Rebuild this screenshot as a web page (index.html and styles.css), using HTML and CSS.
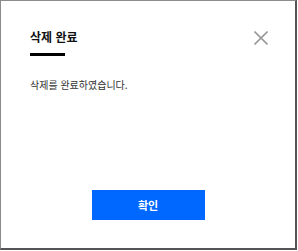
FILE: index.html
```html
<!DOCTYPE html>
<html lang="ko">
<head>
  <meta charset="UTF-8">
  <title>삭제 완료</title>
  <link rel="stylesheet" href="styles.css">
</head>
<body>
  <div class="dialog">
    <div class="head">
      <div>
        <h2 class="title">삭제 완료</h2>
        <div class="bar"></div>
      </div>
      <button class="close" aria-label="닫기">
        <svg width="14" height="14" viewBox="0 0 14 14">
          <path d="M0.5 0.5 L13.5 13.5 M13.5 0.5 L0.5 13.5" stroke="#9a9a9a" stroke-width="1.6" fill="none"/>
        </svg>
      </button>
    </div>
    <p class="msg">삭제를 완료하였습니다.</p>
    <div class="foot">
      <button class="okBtn">확인</button>
    </div>
  </div>
</body>
</html>
```

FILE: styles.css
```css
body {
  margin: 0;
  padding: 0;
  background: #fff;
  font-family: "Noto Sans CJK KR", "Noto Sans", sans-serif;
}

.dialog {
  width: 297px;
  height: 250px;
  box-sizing: border-box;
  border: 1px solid #8c8c8c;
  border-right: 2px solid #555;
  border-bottom: 2px solid #555;
  padding: 27px 27px 28px 29px;
  display: flex;
  flex-direction: column;
}

.head {
  display: flex;
  justify-content: space-between;
  align-items: flex-start;
}

.title {
  margin: 0;
  font-size: 12px;
  font-weight: bold;
  line-height: 17px;
  color: #111;
}

.bar {
  width: 35px;
  height: 3px;
  background: #000;
  margin-top: 8px;
}

.close {
  border: none;
  background: none;
  padding: 0;
  margin-top: 3px;
  width: 14px;
  height: 14px;
  cursor: pointer;
}

.close svg {
  display: block;
}

.msg {
  margin: 22px 0 0;
  font-size: 10px;
  line-height: 14px;
  color: #333;
}

.foot {
  margin-top: auto;
  display: flex;
  justify-content: center;
  padding-right: 2px;
}

.okBtn {
  width: 113px;
  height: 30px;
  border: none;
  background: #0068ff;
  color: #fff;
  font-family: inherit;
  font-size: 11px;
  font-weight: bold;
  cursor: pointer;
}
```
